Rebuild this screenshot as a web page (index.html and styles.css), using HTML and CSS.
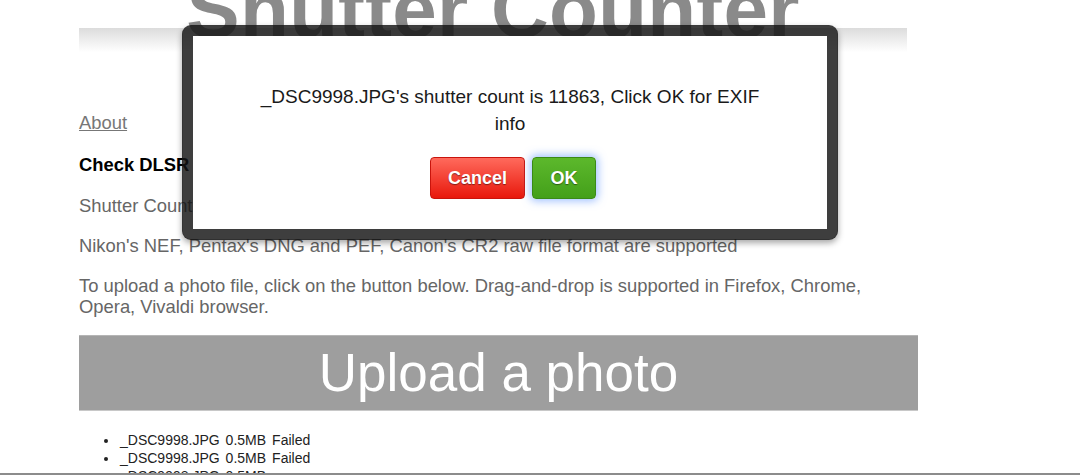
FILE: index.html
```html
<!DOCTYPE html>
<html lang="en">
<head>
    <meta charset="UTF-8">
    <meta name="viewport" content="width=device-width, initial-scale=1.0">
    <title>Shutter Counter</title>
    <link rel="stylesheet" href="styles.css">
</head>
<body>
    <div class="page">
        <h1 class="title">Shutter Counter</h1>
        <div class="title-bar"></div>

        <p class="nav"><a href="#">About</a></p>
        <h2 class="heading">Check DLSR Shutter Count Online</h2>
        <p class="text first">Shutter Count of your camera from a photo file</p>
        <p class="text">Nikon's NEF, Pentax's DNG and PEF, Canon's CR2 raw file format are supported</p>
        <p class="text">To upload a photo file, click on the button below. Drag-and-drop is supported in Firefox, Chrome, Opera, Vivaldi browser.</p>

        <div class="upload">Upload a photo</div>

        <ul class="files">
            <li><span>_DSC9998.JPG</span><span>0.5MB</span><span>Failed</span></li>
            <li><span>_DSC9998.JPG</span><span>0.5MB</span><span>Failed</span></li>
            <li><span>_DSC9998.JPG</span><span>0.5MB</span></li>
        </ul>
    </div>

    <!-- confirm dialog -->
    <div class="dialog">
        <p class="dialog-msg">_DSC9998.JPG's shutter count is 11863, Click OK for EXIF info</p>
        <div class="dialog-buttons">
            <button class="btn btn-cancel">Cancel</button>
            <button class="btn btn-ok">OK</button>
        </div>
    </div>

    <div class="bottom-line"></div>
</body>
</html>
```

FILE: styles.css
```css
body {
    margin: 0;
    font-family: "Liberation Sans", Arial, sans-serif;
    background-color: #fff;
    overflow: hidden;
}
.page {
    width: 839px;
    padding-left: 79px;
}
.title {
    margin: -30px 0 0;
    width: 828px;
    font-size: 80px;
    line-height: 80px;
    font-weight: 900;
    color: #8a8a8a;
    text-align: center;
    letter-spacing: 0.3px;
}
.title-bar {
    width: 828px;
    height: 24px;
    margin-top: -22px;
    background: linear-gradient(#dcdcdc, #fff);
}
.nav {
    margin: 60px 0 0;
    font-size: 18.4px;
    line-height: 21px;
}
.nav a {
    color: #777;
}
.heading {
    margin: 21px 0 0;
    font-size: 18.4px;
    line-height: 21px;
    font-weight: 900;
    color: #000;
}
.text {
    margin: 19px 0 0;
    font-size: 18.4px;
    line-height: 21px;
    color: #666;
}
.text.first {
    margin-top: 20px;
}
.upload {
    margin-top: 18px;
    height: 76px;
    box-sizing: border-box;
    border-top: 1px solid #b5b5b5;
    border-bottom: 1px solid #c8c8c8;
    background-color: #9e9e9e;
    color: #fff;
    font-size: 53px;
    line-height: 74px;
    text-align: center;
}
.files {
    margin: 20px 0 0;
    padding-left: 40px;
    font-size: 14px;
    line-height: 18px;
    color: #222;
}
.files li {
    padding-left: 1px;
}
.files span {
    margin-right: 6px;
}
.dialog {
    position: absolute;
    left: 182px;
    top: 25px;
    width: 656px;
    height: 215px;
    box-sizing: border-box;
    border: 11px solid rgba(20, 20, 20, 0.82);
    border-radius: 9px;
    background-color: #fff;
    background-clip: padding-box;
    box-shadow: 0 3px 6px rgba(0, 0, 0, 0.35);
    text-align: center;
}
.dialog-msg {
    margin: 0;
    padding: 47px 55px 0;
    font-size: 19px;
    line-height: 27px;
    color: #1a1a1a;
}
.dialog-buttons {
    display: flex;
    justify-content: center;
    gap: 7px;
    margin-top: 20px;
    padding-left: 6px;
}
.btn {
    height: 42px;
    border-radius: 4px;
    font-family: "Liberation Sans", Arial, sans-serif;
    font-size: 18px;
    font-weight: bold;
    color: #fff;
    text-shadow: 0 1px 1px rgba(0, 0, 0, 0.45);
    cursor: pointer;
}
.btn-cancel {
    width: 95px;
    border: 1px solid #c9140c;
    background: linear-gradient(#ff6a5c, #e8180c);
}
.btn-ok {
    width: 64px;
    border: 1px solid #3b8a17;
    background: linear-gradient(#5cb82c, #44a01a);
    box-shadow: 0 0 8px 2px rgba(80, 140, 255, 0.55);
}
.bottom-line {
    position: fixed;
    left: 0;
    right: 0;
    bottom: 0;
    height: 2px;
    background-color: #8c8c8c;
}
```
